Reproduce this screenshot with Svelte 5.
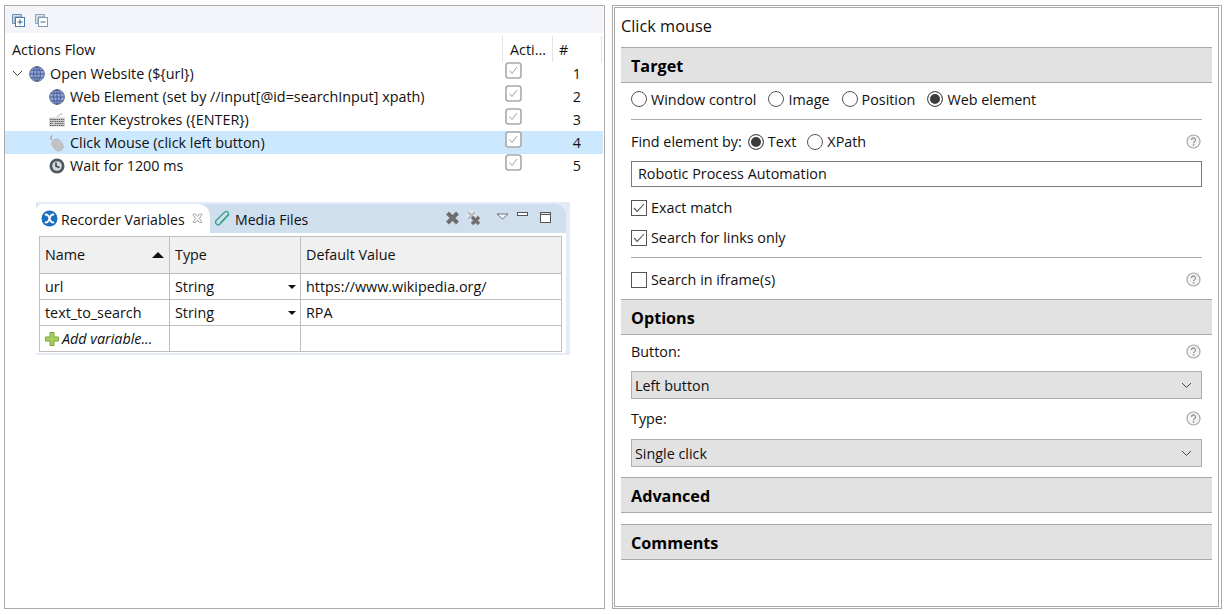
<script lang="ts">
const actions = [
	{ label: 'Open Website (${url})', icon: 'globe', depth: 0, n: 1 },
	{ label: 'Web Element (set by //input[@id=searchInput] xpath)', icon: 'globe', depth: 1, n: 2 },
	{ label: 'Enter Keystrokes ({ENTER})', icon: 'keys', depth: 1, n: 3 },
	{ label: 'Click Mouse (click left button)', icon: 'mouse', depth: 1, n: 4, selected: true },
	{ label: 'Wait for 1200 ms', icon: 'clock', depth: 1, n: 5 }
];
const variables = [
	{ name: 'url', value: 'https://www.wikipedia.org/' },
	{ name: 'text_to_search', value: 'RPA' }
];
</script>

{#snippet help()}
	<svg class="help" width="15" height="15" viewBox="0 0 15 15" aria-hidden="true">
		<circle cx="7.5" cy="7.5" r="6.5" fill="#f4f4f4" stroke="#a8a8a8" stroke-width="1.2" />
		<path d="M5.5 6a2 2 0 1 1 3 1.7c-.7.4-1 .8-1 1.5" fill="none" stroke="#959595" stroke-width="1.3" />
		<rect x="6.8" y="10.2" width="1.5" height="1.5" fill="#959595" />
	</svg>
{/snippet}

{#snippet radio(label: string, on = false)}
	<span class="choice">
		<span class="radio" class:on></span>{label}
	</span>
{/snippet}

{#snippet check(label: string, on = true)}
	<span class="choice check-row">
		<span class="check">
			{#if on}
				<svg width="16" height="16" viewBox="0 0 16 16" aria-hidden="true"><path d="M3 8l3.200 3.400 6.800-7.400" fill="none" stroke="#555" stroke-width="1.100" /></svg>
			{/if}
		</span>{label}
	</span>
{/snippet}

{#snippet chevron()}
	<svg width="11" height="7" viewBox="0 0 11 7" aria-hidden="true"><path d="M1 1l4.500 4.500L10 1" fill="none" stroke="#444" stroke-width="1" /></svg>
{/snippet}

{#snippet globe()}
	<svg width="16" height="16" viewBox="0 0 16 16" aria-hidden="true">
		<circle cx="8" cy="8" r="7.400" fill="#8fa6dc" stroke="#66728f" stroke-width="1" />
		<g fill="none" stroke="#3e4f80" stroke-width=".8">
			<ellipse cx="8" cy="8" rx="3.400" ry="7.200" />
			<path d="M8 .8v14.400M.8 8h14.400M2 4.200h12M2 11.800h12" />
		</g>
	</svg>
{/snippet}

{#snippet keys()}
	<svg width="16" height="16" viewBox="0 0 16 16" aria-hidden="true">
		<path d="M8.500 5c0-2 1-1.500 3-2.500l2-.8" fill="none" stroke="#aaa" stroke-width="1" />
		<rect x="0" y="5.500" width="16" height="9" fill="#cfcfcf" />
		<path d="M1 7.500h14M1 9.500h14M1 11.500h3M6 11.500h9M1 13.500h14" stroke="#5d5d5d" stroke-width="1" stroke-dasharray="1.500 .7" />
	</svg>
{/snippet}

{#snippet mouse()}
	<svg width="16" height="18" viewBox="0 0 16 18" aria-hidden="true">
		<path d="M2.500 6C1.500 4 1.800 2 3.500 1" fill="none" stroke="#8a8a8a" stroke-width="1" />
		<rect x="4" y="4.500" width="9" height="13" rx="4.500" transform="rotate(-38 8.500 11)" fill="#c3c3c3" stroke="#a8a8a8" stroke-width=".6" />
	</svg>
{/snippet}

{#snippet clock()}
	<svg width="16" height="16" viewBox="0 0 16 16" aria-hidden="true">
		<circle cx="8" cy="8" r="7.500" fill="#4e5660" />
		<circle cx="8" cy="8" r="4.800" fill="#d5d9de" />
		<path d="M7 4.500v3.800l3.500 1.200" fill="none" stroke="#3b424b" stroke-width="1.600" />
	</svg>
{/snippet}

{#snippet greyX(faded = false)}
	<svg width="16" height="16" viewBox="0 0 16 16" aria-hidden="true">
		{#if faded}
			<path d="M2 2l7 7M9 2l-7 7" stroke="#fff" stroke-width="4" />
			<path d="M2 2l7 7M9 2l-7 7" stroke="#b9bcc0" stroke-width="2.600" />
			<path d="M6 7l7 7M13 7l-7 7" stroke="#707070" stroke-width="3.400" />
		{:else}
			<path d="M2.500 3l10 10M12.500 3l-10 10" stroke="#6e6e6e" stroke-width="4" />
		{/if}
	</svg>
{/snippet}

<div class="screen">
	<section class="flow-panel">
		<div class="toolbar">
			<svg width="13" height="13" viewBox="0 0 13 13" aria-hidden="true">
				<path d="M.5.5h9v2.500h-6.500v6.500h-2.500z" fill="#cfdcee" stroke="#6d8fb3" />
				<rect x="3.500" y="3.500" width="9" height="9" fill="#fff" stroke="#4f7ba8" />
				<path d="M8 5.500v5M5.500 8h5" stroke="#2f5f8f" />
			</svg>
			<svg width="13" height="13" viewBox="0 0 13 13" aria-hidden="true">
				<path d="M.5.5h9v2.500h-6.500v6.500h-2.500z" fill="#dce3ec" stroke="#8fa5bb" />
				<rect x="3.500" y="3.500" width="9" height="9" fill="#fff" stroke="#7f9ab4" />
				<path d="M5.500 8h5" stroke="#3d6285" />
			</svg>
		</div>

		<div class="tree-head">
			<span class="col-flow">Actions Flow</span>
			<span class="col-active">Acti...</span>
			<span class="col-num">#</span>
		</div>
		{#each actions as a (a.n)}
			<div class="tree-row" class:selected={a.selected}>
				<span class="tree-label" class:child={a.depth > 0}>
					{#if a.depth === 0}<span class="twist">{@render chevron()}</span>{/if}
					<span class="tree-icon">
						{#if a.icon === 'globe'}{@render globe()}
						{:else if a.icon === 'keys'}{@render keys()}
						{:else if a.icon === 'mouse'}{@render mouse()}
						{:else}{@render clock()}{/if}
					</span>
					{a.label}
				</span>
				<span class="tree-check">
					<svg width="17" height="17" viewBox="0 0 17 17" aria-hidden="true">
						<rect x="1" y="1" width="15" height="15" rx="2.500" fill="#fff" stroke="#a9a9a9" stroke-width="1.600" />
						<path d="M4.500 8.500l2.500 3 5-6.500" fill="none" stroke="#a2a2a2" stroke-width="1" />
					</svg>
				</span>
				<span class="tree-num">{a.n}</span>
			</div>
		{/each}

		<div class="view">
			<div class="view-frame">
				<div class="tabs">
					<div class="tab active">
						<svg width="17" height="17" viewBox="0 0 17 17" aria-hidden="true">
							<circle cx="8.500" cy="8.500" r="8" fill="#1f6fc0" />
							<path d="M4 5c1.800-1.200 3.300 0 4.500 3.500s2.700 4.700 4.500 3.500M13 5c-1.800-1.200-3.300 0-4.500 3.500s-2.700 4.700-4.500 3.500" fill="none" stroke="#fff" stroke-width="1.900" />
						</svg>
						<span>Recorder Variables</span>
						<svg class="tab-close" width="11" height="11" viewBox="0 0 11 11" aria-hidden="true">
							<path d="M1.500 1h2l2 2.500 2-2.500h2l.5.500-2.500 4 2.500 3.500-.5.500h-2l-2-2.500-2 2.500h-2l-.5-.5 2.500-3.500-2.500-4z" fill="#fff" stroke="#8a8a8a" stroke-width=".8" />
						</svg>
					</div>
					<div class="tab">
						<svg width="17" height="17" viewBox="0 0 17 17" aria-hidden="true">
							<path d="M15 4.500L6 14c-1.500 1.600-4.500.5-4.500-1.700 0-.8.300-1.500.9-2.100L10.800 2c1.300-1.300 3.700-.3 3.700 1.500 0 .7-.3 1.300-.8 1.800l-7.600 8" fill="none" stroke="#3aa58f" stroke-width="1.400" />
						</svg>
						<span>Media Files</span>
					</div>
					<div class="tab-tools">
						<span class="tool-x">{@render greyX()}</span>
						<span class="tool-x">{@render greyX(true)}</span>
						<svg class="tool-menu" width="13" height="7" viewBox="0 0 13 7" aria-hidden="true"><path d="M1 1h11l-5.500 5z" fill="#f3f6fa" stroke="#555" stroke-width=".8" /></svg>
						<svg class="tool-min" width="11" height="5" viewBox="0 0 11 5" aria-hidden="true"><rect x=".5" y=".5" width="10" height="3" fill="#fff" stroke="#555" /></svg>
						<svg class="tool-max" width="11" height="11" viewBox="0 0 11 11" aria-hidden="true"><rect x=".5" y=".5" width="10" height="10" fill="#fff" stroke="#555" /><rect x=".5" y=".5" width="10" height="2" fill="#dfe6ee" stroke="#555" /></svg>
					</div>
				</div>

				<div class="var-table">
					<div class="var-head">Name<span class="sort"></span></div>
					<div class="var-head">Type</div>
					<div class="var-head">Default Value</div>
					{#each variables as v (v.name)}
						<div class="var-cell">{v.name}</div>
						<div class="var-cell type">String<span class="drop"></span></div>
						<div class="var-cell">{v.value}</div>
					{/each}
					<div class="var-cell add">
						<svg width="14" height="14" viewBox="0 0 14 14" aria-hidden="true">
							<path d="M5 .5h4v4.500h4.500v4h-4.500v4.500h-4v-4.500h-4.500v-4h4.500z" fill="#a4cf5a" stroke="#7aa33c" />
						</svg>
						<em>Add variable...</em>
					</div>
					<div class="var-cell"></div>
					<div class="var-cell"></div>
				</div>
			</div>
		</div>
	</section>

	<section class="props-panel">
		<div class="props-inner">
			<h1>Click mouse</h1>

			<h2>Target</h2>
			<div class="line radios">
				{@render radio('Window control')}
				{@render radio('Image')}
				{@render radio('Position')}
				{@render radio('Web element', true)}
			</div>
			<hr class="rule-a" />
			<div class="line find">
				<span class="find-label">Find element by:</span>
				{@render radio('Text', true)}
				{@render radio('XPath')}
				{@render help()}
			</div>
			<div class="text-input">Robotic Process Automation</div>
			<div class="line exact">{@render check('Exact match')}</div>
			<div class="line links">{@render check('Search for links only')}</div>
			<hr class="rule-b" />
			<div class="line iframe">{@render check('Search in iframe(s)', false)}{@render help()}</div>

			<h2 class="options">Options</h2>
			<div class="line field">Button:{@render help()}</div>
			<div class="select">Left button{@render chevron()}</div>
			<div class="line field second">Type:{@render help()}</div>
			<div class="select">Single click{@render chevron()}</div>

			<h2 class="advanced">Advanced</h2>
			<h2 class="comments">Comments</h2>
		</div>
	</section>
</div>

<style>
	:global(body) {
		background: #fff;
	}

	.screen {
		display: flex;
		align-items: flex-start;
		width: 1227px;
		height: 615px;
		padding: 5px 0 0 4px;
		box-sizing: border-box;
		overflow: hidden;
		font-family: "Open Sans", "Noto Sans", sans-serif;
		font-size: 14.35px;
		color: #111;
		background: #fff;
	}

	/* left side */
	.flow-panel {
		width: 601px;
		height: 604px;
		box-sizing: border-box;
		border: 1px solid #a9a9a9;
		flex: none;
	}

	.toolbar {
		display: flex;
		align-items: center;
		gap: 10px;
		height: 27px;
		padding-left: 7px;
		padding-top: 2px;
		box-sizing: border-box;
		background: #f3f5fa;
		margin-right: 1px;
	}

	.tree-head {
		display: flex;
		height: 26px;
		margin-top: 3px;
		padding-left: 7px;
		line-height: 28px;
	}

	.col-flow {
		width: 490px;
	}

	.col-active {
		width: 50px;
		box-sizing: border-box;
		padding-left: 7px;
		border-left: 1px solid #e4e4e4;
	}

	.col-num {
		width: 50px;
		box-sizing: border-box;
		padding-left: 6px;
		border-left: 1px solid #e4e4e4;
		border-right: 1px solid #e4e4e4;
	}

	.tree-row {
		display: flex;
		height: 23px;
		line-height: 23px;
		margin-right: 1px;
	}

	.tree-row.selected {
		background: #cce8ff;
	}

	.tree-label {
		display: flex;
		align-items: center;
		width: 500px;
		padding-left: 7px;
		box-sizing: border-box;
		white-space: nowrap;
	}

	.tree-label.child {
		padding-left: 44px;
	}

	.twist {
		display: flex;
		width: 17px;
	}

	.tree-icon {
		display: flex;
		align-items: center;
		justify-content: center;
		width: 16px;
		margin-right: 5px;
	}

	.tree-check {
		display: flex;
		width: 58px;
		height: 17px;
	}

	.tree-num {
		width: 18px;
		text-align: right;
	}

	.view {
		width: 534px;
		margin: 25px 0 0 31px;
		padding: 2px 4px 2px 0;
		box-sizing: border-box;
		background: #e4eaf7;
	}

	.view-frame {
		background: #fff;
		border-radius: 0 10px 0 0;
		padding-bottom: 1px;
	}

	.tabs {
		display: flex;
		height: 29px;
		background: #cfdfee;
		border-radius: 0 10px 0 0;
		font-size: 14.1px;
	}

	.tab {
		display: flex;
		align-items: center;
		gap: 4px;
		padding-left: 4px;
		height: 29px;
		white-space: nowrap;
	}

	.tab span {
		padding-top: 2px;
	}

	.tab.active {
		width: 174px;
		padding-left: 5px;
		gap: 3px;
		box-sizing: border-box;
		background: #fff;
		border-radius: 6px 12px 0 0;
	}

	.tab-close {
		margin-left: 4px;
	}

	.tab-tools {
		display: flex;
		align-items: flex-start;
		margin-left: auto;
		padding: 6px 15px 0 0;
	}

	.tool-x {
		display: flex;
		margin-right: 5px;
	}

	.tool-menu {
		margin: 3px 8px 0 9px;
	}

	.tool-min {
		margin: 2px 12px 0 0;
	}

	.tool-max {
		margin-top: 2px;
	}

	.var-table {
		display: grid;
		grid-template-columns: 130px 131px 261px;
		grid-template-rows: 37px 26px 26px 26px;
		margin: 3px 0 0 3px;
		border-top: 1px solid #bfbfbf;
		border-left: 1px solid #bfbfbf;
		width: 523px;
		box-sizing: border-box;
	}

	.var-head,
	.var-cell {
		display: flex;
		align-items: center;
		padding-left: 5px;
		box-sizing: border-box;
		border-right: 1px solid #bfbfbf;
		border-bottom: 1px solid #bfbfbf;
		position: relative;
		white-space: nowrap;
	}

	.var-head {
		padding-bottom: 2px;
		background: #f0f0f0;
	}

	.sort {
		position: absolute;
		right: 5px;
		top: 15px;
		border: 6px solid transparent;
		border-top: 0;
		border-bottom: 6px solid #111;
	}

	.drop {
		position: absolute;
		right: 4px;
		top: 11px;
		border: 4px solid transparent;
		border-bottom: 0;
		border-top: 4px solid #111;
	}

	.add {
		gap: 3px;
	}

	/* right side */
	.props-panel {
		width: 610px;
		height: 604px;
		margin-left: 7px;
		padding: 1px 2px 1px 1px;
		box-sizing: border-box;
		border: 1px solid #a9a9a9;
		flex: none;
	}

	.props-inner {
		height: 100%;
		box-sizing: border-box;
		border: 1px solid #a9a9a9;
		padding: 0 6px;
	}

	h1 {
		margin: 0;
		height: 39px;
		line-height: 36px;
		font-size: 16.3px;
		font-weight: 400;
	}

	h2 {
		margin: 0;
		height: 36px;
		line-height: 37px;
		padding-left: 10px;
		box-sizing: border-box;
		font-size: 16.2px;
		font-weight: 700;
		color: #000;
		background: #e2e2e2;
		border-top: 1px solid #a9a9a9;
		border-bottom: 1px solid #a9a9a9;
	}

	.line {
		display: flex;
		align-items: center;
		margin: 0 10px;
		box-sizing: border-box;
		white-space: nowrap;
	}

	.choice {
		display: flex;
		align-items: center;
		gap: 4px;
	}

	.radio {
		width: 16px;
		height: 16px;
		box-sizing: border-box;
		border: 1px solid #555;
		border-radius: 50%;
		background: #fff;
		flex: none;
	}

	.radio.on {
		background: #3c3c3c;
		box-shadow: inset 0 0 0 2px #fff;
	}

	.check {
		display: flex;
		width: 16px;
		height: 16px;
		box-sizing: border-box;
		border: 1px solid #555;
		flex: none;
	}

	.check svg {
		margin: -1px;
	}

	.radios {
		height: 36px;
		padding-bottom: 4px;
		gap: 12px;
	}

	hr {
		height: 1px;
		margin: 0 10px;
		border: 0;
		background: #a9a9a9;
	}

	.find {
		height: 41px;
		padding-top: 2px;
		gap: 6px;
	}

	.find .choice + .choice {
		margin-left: 5px;
	}

	.find .help,
	.iframe .help,
	.field .help {
		margin-left: auto;
		margin-right: 1px;
	}

	.text-input {
		height: 26px;
		line-height: 24px;
		margin: 0 10px;
		padding-left: 6px;
		box-sizing: border-box;
		border: 1px solid #7a7a7a;
	}

	.exact {
		height: 41px;
	}

	.links {
		height: 19px;
	}

	.rule-b {
		margin-top: 10px;
	}

	.iframe {
		height: 41px;
		padding-top: 2px;
	}

	.field {
		height: 36px;
		padding-bottom: 4px;
	}

	.field.second {
		height: 40px;
		padding-bottom: 2px;
	}

	.select {
		display: flex;
		align-items: center;
		justify-content: space-between;
		height: 28px;
		margin: 0 10px;
		padding: 0 9px 0 3px;
		box-sizing: border-box;
		background: #e2e2e2;
		border: 1px solid #adadad;
	}

	.advanced {
		margin-top: 10px;
	}

	.comments {
		margin-top: 11px;
	}
</style>
